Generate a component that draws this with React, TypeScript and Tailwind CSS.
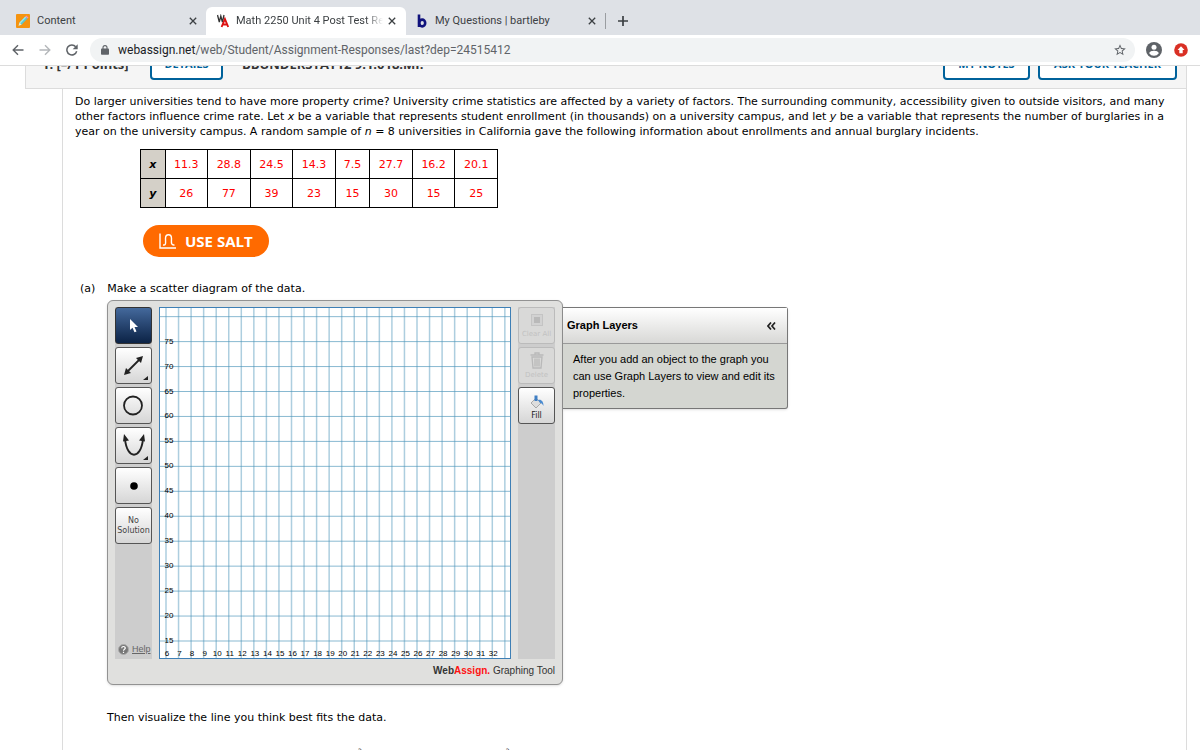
import React from "react";

const data: [string, string][] = [
  ["11.3", "26"], ["28.8", "77"], ["24.5", "39"], ["14.3", "23"],
  ["7.5", "15"], ["27.7", "30"], ["16.2", "15"], ["20.1", "25"],
];

const xTicks = Array.from({ length: 28 }, (_, i) => i + 6);
const yTicks = Array.from({ length: 14 }, (_, i) => 80 - i * 5);
const px = (x: number) => 7 + (x - 6) * 12.55;
const py = (y: number) => 334 - (y - 15) * 4.99;

function Close() {
  return (
    <svg viewBox="0 0 8 8" className="size-2" stroke="#3c4043" strokeWidth="1.3" aria-hidden="true">
      <path d="M0.8 0.8l6.4 6.4M7.2 0.8L0.8 7.2" />
    </svg>
  );
}

function TabBar() {
  return (
    <header className="flex h-[35px] items-end bg-[#dee1e6] text-[11px] text-[#3c4043]">
      <div className="flex h-7 w-[206px] items-center pl-4 pr-2">
        <svg viewBox="0 0 14 14" className="mr-[7px] size-3.5" aria-hidden="true">
          <rect width="14" height="14" rx="1" fill="#f5930f" />
          <path d="M2.500 11.8l1-3.2 5.800-6 2.200 2-5.900 6.100z" fill="#5bc6d0" />
          <path d="M3.500 8.600l5.800-6 .9.800-5.800 6z" fill="#a5e6e6" />
          <path d="M9.300 2.600l1-1 2.200 2-1 1z" fill="#f48fb1" />
          <path d="M2.500 11.800l1-3.200 2.100 2.100z" fill="#ffe7b8" />
        </svg>
        <span className="flex-1">Content</span>
        <button aria-label="Close Content" className="p-[1px]"><Close /></button>
      </div>
      <div className="flex h-7 w-[200px] items-center rounded-t-md bg-white pl-[11px] pr-[9px]">
        <svg viewBox="0 0 12 14" className="mr-[7px] h-3.5 w-3" fill="none" aria-hidden="true">
          <path d="M0.500 1l1.800 7 1.500-6 1.600 6 1.600-7" stroke="#333" strokeWidth="1.300" />
          <path d="M4.600 13L7.900 5l3.300 8M5.800 10.500h4.200" stroke="#d11" strokeWidth="1.900" />
        </svg>
        <span className="flex-1 overflow-hidden whitespace-nowrap [mask-image:linear-gradient(to_right,black_88%,transparent)]">Math 2250 Unit 4 Post Test Re</span>
        <button aria-label="Close Math 2250" className="ml-1 p-[1px]"><Close /></button>
      </div>
      <div className="flex h-7 w-[199px] items-center pl-[11px] pr-2">
        <svg viewBox="0 0 10 14" className="mr-2 h-3.5 w-[10px]" fill="none" stroke="#10127c" strokeWidth="2.600" aria-hidden="true">
          <path d="M2 0.500V13" />
          <ellipse cx="5.200" cy="9" rx="3" ry="3.400" />
        </svg>
        <span className="flex-1 whitespace-nowrap">My Questions | bartleby</span>
        <button aria-label="Close My Questions" className="p-[1px]"><Close /></button>
      </div>
      <button aria-label="New tab" className="mb-1.5 flex h-4 items-center border-l border-[#9a9da1] pl-3">
        <svg viewBox="0 0 10 10" className="size-2.5" stroke="#3c4043" strokeWidth="1.700" aria-hidden="true"><path d="M5 0v10M0 5h10" /></svg>
      </button>
    </header>
  );
}

function Toolbar() {
  return (
    <nav className="flex h-[31px] items-center border-b border-[#dcdcdc] bg-white px-3">
      <div className="flex gap-[15px]">
        <button aria-label="Back">
          <svg viewBox="0 0 12 12" className="size-3" fill="none" stroke="#5f6368" strokeWidth="1.400"><path d="M11.500 6H1.500M6 1.200L1.200 6 6 10.800" /></svg>
        </button>
        <button aria-label="Forward">
          <svg viewBox="0 0 12 12" className="size-3" fill="none" stroke="#b4b7ba" strokeWidth="1.400"><path d="M0.500 6h10M6 1.200L10.800 6 6 10.800" /></svg>
        </button>
        <button aria-label="Reload">
          <svg viewBox="0 0 12 12" className="size-3" fill="none" stroke="#5f6368" strokeWidth="1.500"><path d="M10.700 7.300A5 5 0 1 1 9.700 2.700" /><path d="M11.700 0.300v5H6.700z" fill="#5f6368" stroke="none" /></svg>
        </button>
      </div>
      <div className="ml-3 flex h-6 flex-1 items-center rounded-full bg-[#f1f3f4] pl-[11px] pr-2">
        <svg viewBox="0 0 8 10" className="mr-[9px] h-2.5 w-2" aria-hidden="true"><rect y="3.600" width="8" height="6.200" rx="0.800" fill="#5f6368" /><path d="M2 4V2.600a2 2 0 0 1 4 0V4" fill="none" stroke="#5f6368" strokeWidth="1.100" /></svg>
        <span className="flex-1 text-[12px] text-[#5f6368]"><span className="text-[#202124]">webassign.net</span>/web/Student/Assignment-Responses/last?dep=24515412</span>
        <button aria-label="Bookmark">
          <svg viewBox="0 0 24 24" className="size-3.5" fill="#5f6368"><path d="M22 9.240l-7.190-.620L12 2 9.190 8.630 2 9.240l5.460 4.730L5.820 21 12 17.270 18.180 21l-1.630-7.030L22 9.240zM12 15.400l-3.760 2.270 1-4.280-3.320-2.880 4.380-.380L12 6.100l1.710 4.040 4.380.380-3.320 2.880 1 4.280L12 15.400z" /></svg>
        </button>
      </div>
      <button aria-label="Profile" className="ml-[11px]">
        <svg viewBox="0 0 16 16" className="size-4"><circle cx="8" cy="8" r="8" fill="#5f6368" /><circle cx="8" cy="5.200" r="2.500" fill="#fff" /><path d="M3.200 11.300c0-1.700 3.200-2.500 4.800-2.500s4.800.8 4.800 2.500A5.800 5.800 0 0 1 8 13.800a5.800 5.800 0 0 1-4.800-2.500z" fill="#fff" /></svg>
      </button>
      <button aria-label="Update" className="ml-3">
        <svg viewBox="0 0 14 14" className="size-3.5"><circle cx="7" cy="7" r="6.800" fill="#d93025" /><path d="M7 3.200L3.500 7h1.800v3.300h3.400V7h1.800z" fill="#fff" /></svg>
      </button>
    </nav>
  );
}

const outline = "flex h-[30px] items-center justify-center rounded border-2 border-[#00629b] bg-white pb-0.5 text-[11px] leading-4 font-bold text-[#00629b]";

function QuestionBar() {
  return (
    <div className="ml-[25px] mr-[13px] flex h-[23px] items-end overflow-hidden border border-t-0 border-[#dcdcdc] bg-[#f5f5f5] pb-2 pr-[9px] font-['Open_Sans',sans-serif] text-[13px] font-bold text-[#333]">
      <h2 className="w-[124px] shrink-0 pb-2 pl-4 leading-4 whitespace-nowrap">1. [–/1 Points]</h2>
      <button className={`${outline} w-[73px]`}>DETAILS</button>
      <span className="ml-[19px] flex-1 pb-2 leading-4 whitespace-nowrap">BBUNDERSTAT12 9.1.018.MI.</span>
      <button className={`${outline} w-[87px]`}>MY NOTES</button>
      <button className={`${outline} ml-2 w-[139px]`}>ASK YOUR TEACHER</button>
    </div>
  );
}

const cell = "border border-black p-0 text-center";

function DataTable() {
  return (
    <table className="ml-[65px] mt-2.5 w-[358px] border-collapse text-[11px] text-[#f00]">
      <tbody>
        {[0, 1].map((r) => (
          <tr key={r} className="h-[29px]">
            <th scope="row" className={`${cell} w-[25px] bg-[#d4d0c8] italic text-black`}>{r ? "y" : "x"}</th>
            {data.map((d) => (
              <td key={d[0]} className={`${cell} ${d[0] === "7.5" ? "w-[35px]" : "w-[43px]"}`}>{d[r]}</td>
            ))}
          </tr>
        ))}
      </tbody>
    </table>
  );
}

const tool = "flex h-[37px] w-[37px] flex-col items-center justify-center rounded-[3px] border border-[#555] bg-linear-to-b from-white to-[#d6d6d6] text-[#222]";

function ToolButtons() {
  return (
    <div className="flex w-[37px] flex-col gap-[3px] bg-[#cdcdcd] font-['Liberation_Sans',sans-serif]">
      <button aria-label="Select" className="flex h-[37px] w-[37px] items-center justify-center rounded-[3px] border border-[#333] bg-linear-to-b from-[#44699c] to-[#0c2346]">
        <svg viewBox="0 0 10 16" className="h-4 w-2.5" fill="#fff"><path d="M1 1v11l2.500-2.200 2 4.500 2-.9-2-4.300H9z" /></svg>
      </button>
      <button aria-label="Line" className={tool}>
        <svg viewBox="0 0 35 35" className="size-[35px]" fill="currentColor"><path d="M11 24L24 11" stroke="currentColor" strokeWidth="1.800" /><path d="M8 27l2-7 5 5zM27 8l-2 7-5-5zM32 28v4h-5z" /></svg>
      </button>
      <button aria-label="Circle" className={tool}>
        <svg viewBox="0 0 35 35" className="size-[35px]" fill="none" stroke="currentColor" strokeWidth="1.800"><circle cx="17" cy="17.500" r="9" /></svg>
      </button>
      <button aria-label="Parabola" className={tool}>
        <svg viewBox="0 0 35 35" className="size-[35px]" fill="currentColor"><path d="M9 11C11 32 25 32 27 11" fill="none" stroke="currentColor" strokeWidth="1.900" /><path d="M8 6l5 6.500-6 1zM28 6l-5 6.500 6 1zM32 28v4h-5z" /></svg>
      </button>
      <button aria-label="Point" className={tool}><svg viewBox="0 0 8 8" className="size-2"><circle cx="4" cy="4" r="3.800" /></svg></button>
      <button className={`${tool} font-['DejaVu_Sans',sans-serif] text-[8px] leading-[10px] text-[#444]`}><span>No</span><span>Solution</span></button>
      <a href="#help" className="mt-auto flex items-center gap-[3px] pb-1 pl-[3px] text-[9px] leading-3 text-[#666]">
        <svg viewBox="0 0 11 11" className="size-[11px]" aria-hidden="true"><circle cx="5.500" cy="5.500" r="5" fill="#777" stroke="#aaa" /><path d="M3.700 4.300c0-2.400 3.600-2.300 3.600-.2 0 1.300-1.800 1.200-1.800 2.700M5.500 7.700v1.200" fill="none" stroke="#fff" strokeWidth="1.200" /></svg>
        <span className="underline">Help</span>
      </a>
    </div>
  );
}

function Graph() {
  return (
    <svg viewBox="0 0 352 352" className="size-[352px] bg-white" role="img" aria-label="Empty coordinate grid" fontFamily="Liberation Sans, sans-serif" fontSize="8">
      <g stroke="#4a93b8">
        {xTicks.map((x) => <path key={x} d={`M${px(x)} 0V352`} strokeWidth="1.500" strokeOpacity="0.450" />)}
        {yTicks.map((y) => <path key={y} d={`M0 ${py(y)}H352`} strokeOpacity="0.650" />)}
      </g>
      <g textAnchor="middle" fill="#000">
        {yTicks.slice(1).map((y) => <text key={y} x="10" y={py(y) + 2}>{y}</text>)}
        {xTicks.slice(0, 27).map((x) => <text key={x} x={px(x) + 1} y="349">{x}</text>)}
      </g>
      <rect x="0.500" y="0.500" width="351" height="351" fill="none" stroke="#3e7fb5" />
    </svg>
  );
}

function ActionButtons() {
  return (
    <div className="flex w-[37px] flex-col gap-[3px] bg-[#cdcdcd] font-['DejaVu_Sans',sans-serif] text-[7px] leading-[9px]">
      <button disabled className="flex h-[37px] w-[37px] flex-col items-center justify-end rounded-[3px] border border-[#bbb] bg-[#d9d9d8] pb-1 whitespace-nowrap text-[#c2c2c2]">
        <svg viewBox="0 0 12 12" className="mb-1 size-3"><rect x="0.500" y="0.500" width="11" height="11" fill="#d2d2d2" stroke="#c4c4c4" /><rect x="3" y="3" width="6" height="6" fill="#b9b9b9" /></svg>
        Clear All
      </button>
      <button disabled className="flex h-[37px] w-[37px] flex-col items-center justify-end rounded-[3px] border border-[#bbb] bg-[#d9d9d8] pb-[3px] text-[#c2c2c2]">
        <svg viewBox="0 0 14 17" className="mb-0.5 h-[17px] w-3.5" fill="none" stroke="#b9b9b9" strokeWidth="1.300"><path d="M0.500 3h13M5 3V1h4v2M2 5h10l-1 11H3zM5 6.500v8M7 6.500v8M9 6.500v8" /></svg>
        Delete
      </button>
      <button className={`${tool} pt-1`}>
        <svg viewBox="0 0 14 14" className="mb-0.5 size-3.5"><path d="M1 8l5-5 5 5-5 5z" fill="#ddd" stroke="#999" strokeWidth="0.800" /><path d="M4.500 0.500h3V6h-3z" fill="#3f7fc4" /><path d="M8 5c3-1 5.500 1 5.500 6-1-2-2-3-3.500-3z" fill="#4b8bd0" /></svg>
        <span className="text-[8px]">Fill</span>
      </button>
    </div>
  );
}

function GraphingTool() {
  return (
    <div className="ml-8 mt-1 flex items-start">
      <section className="rounded-md border border-[#929292] bg-[#e0e0de] px-[7px] pt-1.5 shadow-sm">
        <div className="flex gap-[7px]">
          <ToolButtons />
          <Graph />
          <ActionButtons />
        </div>
        <p className="h-[25px] pt-1 text-right font-['Liberation_Sans',sans-serif] text-[10px] leading-4 text-[#333]"><b>Web</b><b className="text-[#f11]">Assign.</b> Graphing Tool</p>
      </section>
      <aside className="mt-[7px] w-[225px] rounded-r-[3px] border border-l-0 border-[#777] bg-[#d4d6d1] font-['Liberation_Sans',sans-serif] shadow-sm">
        <div className="flex h-9 items-center justify-between border-b border-[#999] bg-linear-to-b from-white to-[#d8d8d6] pl-1 pr-[11px]">
          <h3 className="text-[11px] font-bold">Graph Layers</h3>
          <button aria-label="Collapse layers"><svg viewBox="0 0 9 8" className="h-2 w-[9px]" fill="none" stroke="#222" strokeWidth="1.700"><path d="M4 0.500L1 4l3 3.500M8 0.500L5 4l3 3.500" /></svg></button>
        </div>
        <p className="px-2.5 pt-[7px] pb-1.5 text-[11px] leading-[17px]">After you add an object to the graph you<br />can use Graph Layers to view and edit its<br />properties.</p>
      </aside>
    </div>
  );
}

export default function App() {
  return (
    <div className="flex h-screen flex-col overflow-hidden bg-white font-[Roboto,sans-serif]">
      <TabBar />
      <Toolbar />
      <QuestionBar />
      <main className="ml-[62px] mr-[13px] min-h-0 flex-1 overflow-hidden border-x border-[#dcdcdc] pl-3 pt-[5px] font-['DejaVu_Sans',sans-serif] text-[11px] leading-[15px] text-black">
        <p className="whitespace-nowrap">
          Do larger universities tend to have more property crime? University crime statistics are affected by a variety of factors. The surrounding community, accessibility given to outside visitors, and many<br />
          other factors influence crime rate. Let <i>x</i> be a variable that represents student enrollment (in thousands) on a university campus, and let <i>y</i> be a variable that represents the number of burglaries in a<br />
          year on the university campus. A random sample of <i>n</i> = 8 universities in California gave the following information about enrollments and annual burglary incidents.
        </p>
        <DataTable />
        <button className="ml-[68px] mt-[17px] flex h-8 items-center gap-[9px] rounded-full bg-[#ff6a00] px-4 font-['Open_Sans',sans-serif] text-[15px] font-bold text-white">
          <svg viewBox="0 0 17 16" className="h-4 w-[17px]" fill="none" stroke="#fff" strokeWidth="1.400" aria-hidden="true"><path d="M1 0.500V15h16" /><path d="M4 12C7.500 12.500 6.500 9 6.500 5.500C6.500 0.500 12.500 0.500 12.500 5.500C12.500 9 11.500 12.500 15.500 12" /></svg>
          USE SALT
        </button>
        <h3 className="mt-6 flex gap-3 pl-[5px]"><span>(a)</span><span>Make a scatter diagram of the data.</span></h3>
        <GraphingTool />
        <p className="ml-8 mt-[25px]">Then visualize the line you think best fits the data.</p>
        <p className="mt-5 flex gap-36 pl-[283px] text-[8px] leading-3"><sup className="top-0 leading-3">2</sup><sup className="top-0 leading-3">2</sup></p>
      </main>
    </div>
  );
}
